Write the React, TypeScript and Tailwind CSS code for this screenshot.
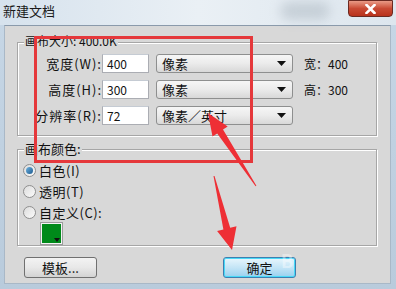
import React from "react";

const font = { fontFamily: '"Noto Sans CJK SC", "Liberation Sans", sans-serif' };

function Caret() {
  return (
    <svg width="9" height="5" viewBox="0 0 9 5" className="shrink-0">
      <path d="M0 0 L9 0 L4.5 5 Z" fill="#111" />
    </svg>
  );
}

function Select({ text }: { text: string }) {
  return (
    <div className="w-[137px] h-[19px] flex items-center justify-between pl-[5px] pr-[6px] rounded-[3px] border border-[#8e8f8f] bg-gradient-to-b from-[#f6f6f6] via-[#ebebeb] to-[#d8d8d8] text-[13px] leading-none text-[#111]">
      <span>{text}</span>
      <Caret />
    </div>
  );
}

function Row({ label, value, unit, info }: { label: string; value: string; unit: string; info?: string }) {
  return (
    <div className="flex items-center h-[19px]">
      <div className="w-[84px] text-right text-[13px] leading-none tracking-[1px] text-[#111] whitespace-nowrap">{label}</div>
      <div className="w-[47px] h-[19px] bg-white border border-[#abadb3] border-t-[#c5cbd3] flex items-center pl-[4px] text-[12px] leading-none text-[#111]">
        {value}
      </div>
      <div className="ml-[7px]">
        <Select text={unit} />
      </div>
      {info && <div className="ml-[11px] text-[12px] leading-none text-[#111] whitespace-nowrap">{info}</div>}
    </div>
  );
}

function Radio({ checked, label }: { checked?: boolean; label: string }) {
  return (
    <div className="flex items-center h-[20px]">
      <div className="w-[13px] h-[13px] rounded-full border border-[#8f8f8f] bg-gradient-to-br from-[#dcdcdc] to-[#fbfbfb] flex items-center justify-center">
        {checked && <div className="w-[7px] h-[7px] rounded-full bg-gradient-to-br from-[#6fb3e0] to-[#1a5b90]" />}
      </div>
      <span className="ml-[3px] text-[13px] leading-none tracking-[0.5px] text-[#111]">{label}</span>
    </div>
  );
}

export default function App() {
  return (
    <div className="relative w-[396px] h-[289px] overflow-hidden bg-gradient-to-b from-[#c7d7e6] to-[#b9cbdc]" style={font}>
      {/* title bar */}
      <div className="relative h-[25px] bg-gradient-to-r from-[#d6e2ed] via-[#eaf0f5] to-[#dde6ee] flex items-start">
        <div className="absolute left-[280px] top-[2px] w-[50px] h-[18px] rounded-full bg-[#9aa6b0] opacity-40 blur-[6px]" />
        <span className="ml-[3px] mt-[4px] text-[13px] leading-none text-[#1a1a1a]">新建文档</span>
        <div className="ml-auto mr-[3px] w-[45px] h-[17px] rounded-b-[4px] border border-[#6b2a22] bg-gradient-to-b from-[#e99a86] via-[#c94a34] to-[#b8321c] flex items-center justify-center">
          <svg width="11" height="10" viewBox="0 0 11 10">
            <path d="M1.5 1 L9.5 9 M9.5 1 L1.5 9" stroke="#fff" strokeWidth="2.6" strokeLinecap="square" />
          </svg>
        </div>
      </div>

      {/* client area */}
      <div className="mx-[4px] w-[387px] h-[259px] bg-[#d8d8d8] border border-[#a9b8c7] border-t-[#8a9aab] px-[12px] flex flex-col">
        {/* group 1 */}
        <div className="relative mt-[16px] w-[360px] h-[94px] border border-[#a6a6a6] shadow-[inset_1px_1px_0_#ffffff,1px_1px_0_#ffffff] pt-[11px] flex flex-col gap-[7px]">
          <div className="absolute left-[6px] top-[-8px] px-[1px] bg-[#d8d8d8] text-[12px] leading-none text-[#111] whitespace-nowrap">画布大小: 400.0K</div>
          <Row label="宽度(W):" value="400" unit="像素" info="宽：400" />
          <Row label="高度(H):" value="300" unit="像素" info="高：300" />
          <Row label="分辨率(R):" value="72" unit="像素／英寸" />
        </div>

        {/* group 2 */}
        <div className="relative mt-[13px] w-[360px] h-[97px] border border-[#a6a6a6] shadow-[inset_1px_1px_0_#ffffff,1px_1px_0_#ffffff] pt-[10px] pl-[5px] flex flex-col gap-[1px]">
          <div className="absolute left-[6px] top-[-8px] px-[1px] bg-[#d8d8d8] text-[13px] leading-none text-[#111] whitespace-nowrap">画布颜色:</div>
          <Radio checked label="白色(I)" />
          <Radio label="透明(T)" />
          <Radio label="自定义(C):" />
          <div className="relative ml-[18px] w-[21px] h-[21px] border border-[#f4f4f4] bg-[#008a1a] shadow-[0_0_0_1px_#9c9c9c]">
            <svg width="6" height="4" viewBox="0 0 6 4" className="absolute right-[1px] bottom-[1px]">
              <path d="M0 0 L6 0 L3 4 Z" fill="#111" />
            </svg>
          </div>
        </div>

        {/* buttons */}
        <div className="mt-[11px] flex items-center">
          <div className="ml-[7px] w-[73px] h-[21px] rounded-[3px] border border-[#707070] bg-gradient-to-b from-[#f3f3f3] via-[#e8e8e8] to-[#d3d3d3] flex items-center justify-center text-[13px] leading-none text-[#111]">
            模板...
          </div>
          <div className="ml-[126px] w-[73px] h-[21px] rounded-[3px] border border-[#3c7fb1] bg-gradient-to-b from-[#e8f6fd] via-[#c4e5f6] to-[#98d1ef] shadow-[inset_0_0_0_1px_#48d9f7] flex items-center justify-center text-[13px] leading-none text-[#111]">
            确定
          </div>
        </div>
      </div>

      {/* annotations: red rectangle, arrows, watermark */}
      <div className="absolute left-[34px] top-[36px] w-[219px] h-[127px] border-[3px] border-[#e5383b]" />
      <svg className="absolute left-0 top-0" width="396" height="289" viewBox="0 0 396 289">
        <polygon
          points="208,113 227.7,126.5 223,129.6 256.4,185.7 255.6,186.3 217.2,133.4 212.5,136.5"
          fill="#ee2f35"
        />
        <polygon
          points="232,250 236.5,226.2 230.2,227.8 214.5,175.9 213.5,176.1 223.4,229.4 217.1,231"
          fill="#ee2f35"
        />
      </svg>
      <div className="absolute left-[281px] top-[251px] text-[18px] leading-none font-bold text-white/40">B</div>
    </div>
  );
}
